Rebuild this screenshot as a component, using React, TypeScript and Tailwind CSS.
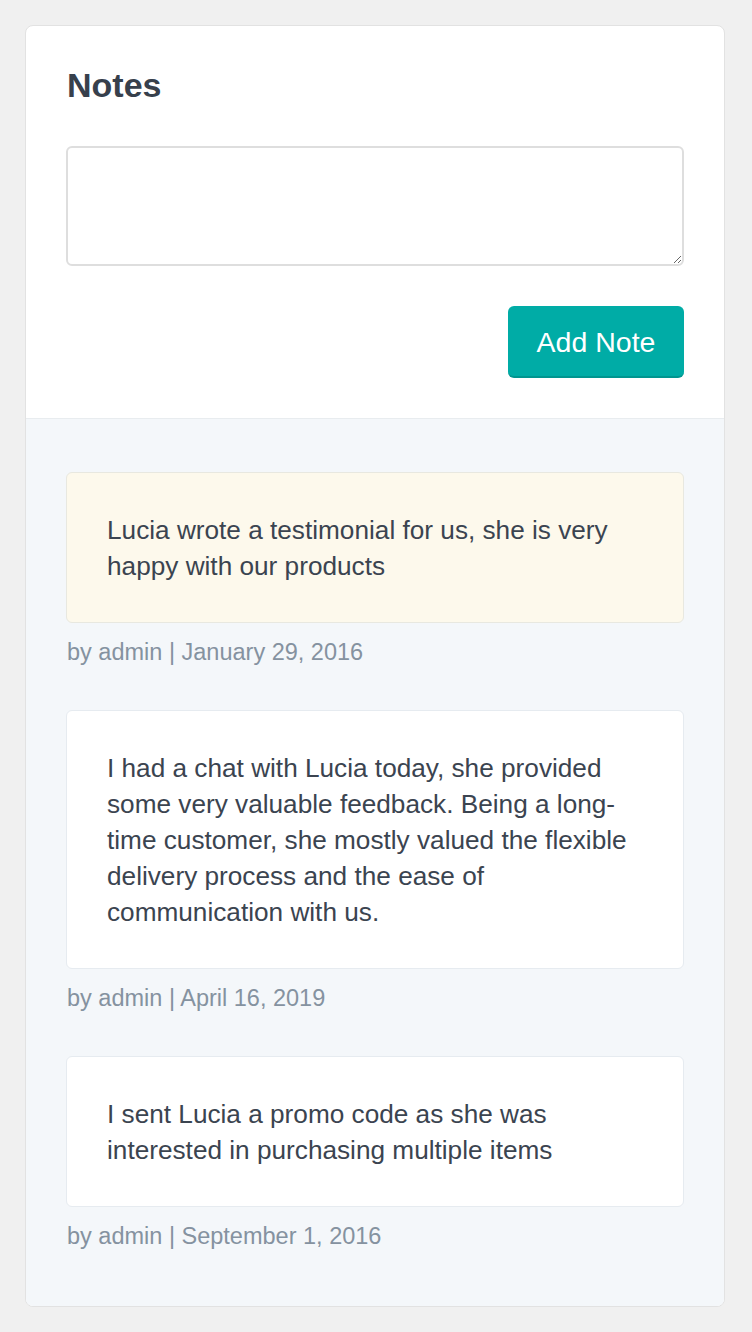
const notes = [
  {
    text: "Lucia wrote a testimonial for us, she is very happy with our products",
    date: "January 29, 2016",
    highlight: true,
  },
  {
    text: "I had a chat with Lucia today, she provided some very valuable feedback. Being a long-time customer, she mostly valued the flexible delivery process and the ease of communication with us.",
    date: "April 16, 2019",
    highlight: false,
  },
  {
    text: "I sent Lucia a promo code as she was interested in purchasing multiple items",
    date: "September 1, 2016",
    highlight: false,
  },
];

const NoteItem = ({ text, date, highlight }: { text: string; date: string; highlight: boolean }) => (
  <div>
    <div
      className={
        highlight
          ? "rounded-[6px] border border-[#e8e8e0] bg-[#fdf9ec] px-[40px] pt-[39px] pb-[38px]"
          : "rounded-[6px] border border-[#e6ebf0] bg-white px-[40px] pt-[39px] pb-[38px]"
      }
    >
      <p className="text-[26.2px] leading-[36px] text-[#3b4450]">{text}</p>
    </div>
    <div className="mt-[12px] pl-[1px] text-[23.5px] leading-[34px] text-[#8592a0]">
      by admin | {date}
    </div>
  </div>
);

export default function App() {
  return (
    <div
      className="min-h-screen bg-[#f0f0f0] px-[25px] pt-[25px] pb-[26px]"
      style={{ fontFamily: '"Liberation Sans", Arial, Helvetica, sans-serif' }}
    >
      <div className="w-[700px] overflow-hidden rounded-[8px] border border-[#e2e2e2] bg-white">
        {/* Add note form */}
        <div className="border-b border-[#e8ecef] px-[40px] pt-[39px] pb-[40px]">
          <h2 className="pl-[1px] text-[34px] font-bold leading-[40px] text-[#37404c]">Notes</h2>
          <textarea className="mt-[41px] block h-[120px] w-full rounded-[6px] border-2 border-[#dedede] bg-white p-3 text-[24px] outline-none" />
          <div className="mt-[40px] flex justify-end">
            <button className="h-[72px] w-[176px] rounded-[6px] border-b-2 border-[#00958f] bg-[#00aca6] pt-[3px] text-[28.5px] text-white">
              Add Note
            </button>
          </div>
        </div>

        {/* Notes list */}
        <div className="flex flex-col gap-[41px] bg-[#f4f7fa] px-[40px] pt-[53px] pb-[53px]">
          {notes.map((n) => (
            <NoteItem key={n.date} {...n} />
          ))}
        </div>
      </div>
    </div>
  );
}
